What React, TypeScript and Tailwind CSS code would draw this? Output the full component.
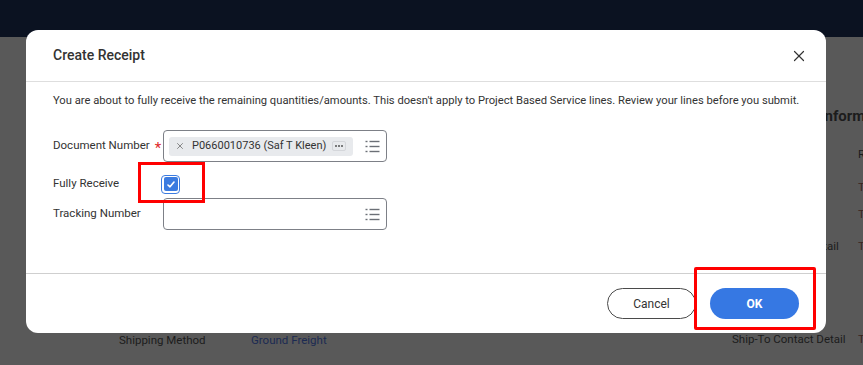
import { X } from 'lucide-react';

function ListIcon() {
    return (
        <svg width="15" height="13" viewBox="0 0 15 13" fill="none" stroke="#6b6f76" strokeWidth="1.4">
            <line x1="0.5" y1="1.5" x2="2.5" y2="1.5" />
            <line x1="4.5" y1="1.5" x2="14.5" y2="1.5" />
            <line x1="0.5" y1="6.5" x2="2.5" y2="6.5" />
            <line x1="4.5" y1="6.5" x2="14.5" y2="6.5" />
            <line x1="0.5" y1="11.5" x2="2.5" y2="11.5" />
            <line x1="4.5" y1="11.5" x2="14.5" y2="11.5" />
        </svg>
    );
}

export default function App() {
    return (
        <div className="relative w-[863px] h-[365px] overflow-hidden bg-[#595959] font-['Roboto','Liberation_Sans',sans-serif]">
            {/* page behind the dialog */}
            <div className="h-[37px] bg-[#0b1221]" />
            <div className="flex text-[11.5px] text-[#1c1c1c] whitespace-nowrap">
                <div className="w-[732px] shrink-0 pl-[119px] pt-[295px] flex">
                    <span className="w-[132px]">Shipping Method</span>
                    <span className="text-[#1b2a52]">Ground Freight</span>
                </div>
                <div className="flex-1 pt-[68px]">
                    <div className="pl-[25px] text-[15px] font-bold leading-[22px]">Shipping Information</div>
                    <div className="flex flex-col">
                        <div className="mt-[19px] flex h-[16px]"><span className="w-[126px] shrink-0" /><span>Rec</span></div>
                        <div className="mt-[17px] flex h-[16px]"><span className="w-[126px] shrink-0">Ship-From</span><span className="text-[#3a2420]">Test</span></div>
                        <div className="mt-[11px] flex h-[16px]"><span className="w-[126px] shrink-0">Ship-From Site</span><span className="text-[#3a2420]">Test</span></div>
                        <div className="mt-[16px] flex h-[16px]"><span className="w-[126px] shrink-0">Bill-To Contact Detail</span><span className="text-[#3a2420]">Test</span></div>
                        <div className="mt-[77px] flex h-[16px]"><span className="w-[126px] shrink-0">Ship-To Contact Detail</span><span className="text-[#3a2420]">Test</span></div>
                    </div>
                </div>
            </div>

            {/* dialog */}
            <div className="absolute left-[26px] top-[30px] w-[800px] h-[303px] bg-white rounded-[12px] flex flex-col text-[#333333]">
                <div className="h-[52px] flex items-center justify-between pl-[27px] pr-[18px] border-b border-[#dedede]">
                    <h2 className="text-[14px] font-medium text-[#333]">Create Receipt</h2>
                    <X size={18} strokeWidth={1.6} className="text-[#333]" />
                </div>
                <div className="flex-1 px-[27px] pt-[12px] border-b border-[#cfcfcf] text-[11.5px] whitespace-nowrap">
                    <p className="text-[11.2px] leading-[14px] text-[#333]">You are about to fully receive the remaining quantities/amounts. This doesn't apply to Project Based Service lines. Review your lines before you submit.</p>
                    <div className="mt-[22px] flex items-center">
                        <div className="w-[110px] flex items-center gap-[5px]">Document Number<span className="text-[#de2b2b] text-[15px] leading-[12px] pt-[3px]">*</span></div>
                        <div className="w-[224px] h-[32px] border border-[#7d8087] rounded-[4px] flex items-center pl-[5px] pr-[6px] justify-between">
                            <div className="w-[184px] h-[19px] bg-[#e8eaed] rounded-[3px] flex items-center pl-[6px] pr-[7px] text-[11px] text-[#333]">
                                <X size={10} strokeWidth={1.6} className="text-[#555]" />
                                <span className="ml-[7px] flex-1">P0660010736 (Saf T Kleen)</span>
                                <span className="w-[14px] h-[10px] border border-[#d4d6da] rounded-[2px] flex items-center justify-center gap-[1.5px]">
                                    <span className="w-[1.5px] h-[1.5px] bg-[#555] rounded-full" />
                                    <span className="w-[1.5px] h-[1.5px] bg-[#555] rounded-full" />
                                    <span className="w-[1.5px] h-[1.5px] bg-[#555] rounded-full" />
                                </span>
                            </div>
                            <ListIcon />
                        </div>
                    </div>
                    <div className="mt-[12px] flex items-center h-[20px]">
                        <div className="w-[108px]">Fully Receive</div>
                        <div className="w-[19px] h-[19px] rounded-[4px] border-[1.5px] border-[#3b7be0] p-[1.5px]">
                            <div className="w-full h-full bg-[#3b7be0] rounded-[2px] flex items-center justify-center">
                                <svg width="8" height="7" viewBox="0 0 8 7" fill="none" stroke="white" strokeWidth="1.6" strokeLinecap="round" strokeLinejoin="round">
                                    <path d="M1 4 L3 5.8 L7 1" />
                                </svg>
                            </div>
                        </div>
                    </div>
                    <div className="mt-[4px] flex items-center">
                        <div className="w-[110px]">Tracking Number</div>
                        <div className="w-[224px] h-[32px] border border-[#7d8087] rounded-[4px] flex items-center justify-end pr-[6px]">
                            <ListIcon />
                        </div>
                    </div>
                </div>
                <div className="h-[59px] flex items-center justify-end gap-[14px] pr-[27px]">
                    <button className="w-[89px] h-[31px] rounded-full border border-[#4a4a4a] text-[12px] text-[#333]">Cancel</button>
                    <button className="w-[89px] h-[31px] rounded-full bg-[#3678e3] text-[12px] font-bold text-white">OK</button>
                </div>
            </div>

            {/* annotation boxes */}
            <div className="absolute left-[138px] top-[162px] w-[67px] h-[41px] border-[3px] border-[#ff0000]" />
            <div className="absolute left-[694px] top-[267px] w-[122px] h-[63px] border-[3px] border-[#ff0000] rounded-[2px]" />
        </div>
    );
}
